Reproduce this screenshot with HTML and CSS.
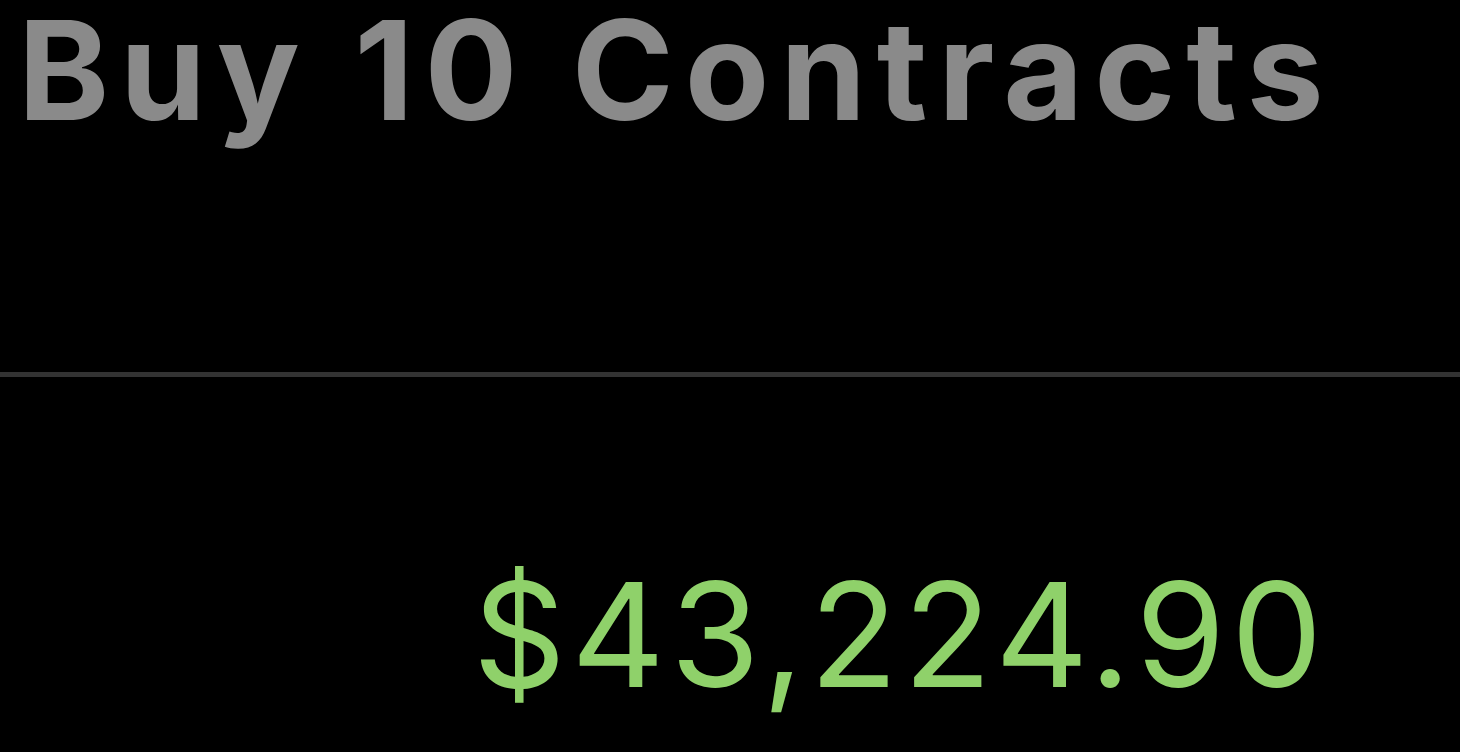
FILE: index.html
```html
<!DOCTYPE html>
<html>
<head>
<meta charset="utf-8">
<link rel="stylesheet" href="styles.css">
</head>
<body>
<div class="screen">
  <div class="header">
    <h1 class="title">Buy 10 Contracts</h1>
  </div>
  <div class="divider"></div>
  <div class="summary">
    <div class="price">$43,224.90</div>
  </div>
</div>
</body>
</html>
```
FILE: styles.css
```css
html, body {
  margin: 0;
  padding: 0;
  background: #000;
}
.screen {
  width: 1460px;
  height: 752px;
  display: flex;
  flex-direction: column;
  background: #000;
  overflow: hidden;
  font-family: Inter, "Liberation Sans", sans-serif;
}
.header {
  height: 372px;
  padding-left: 18px;
  box-sizing: border-box;
}
.title {
  margin: 0;
  font-size: 138px;
  line-height: 1;
  font-weight: 700;
  color: #8a8a8a;
  letter-spacing: 10.8px;
  padding-top: 1px;
  white-space: nowrap;
}
.divider {
  height: 5px;
  background: #333;
}
.summary {
  padding-top: 185px;
  display: flex;
  justify-content: flex-end;
  padding-right: 132px;
}
.price {
  font-size: 145px;
  line-height: 1;
  font-weight: 400;
  color: #8fd16a;
  letter-spacing: 5.5px;
  white-space: nowrap;
}
```
